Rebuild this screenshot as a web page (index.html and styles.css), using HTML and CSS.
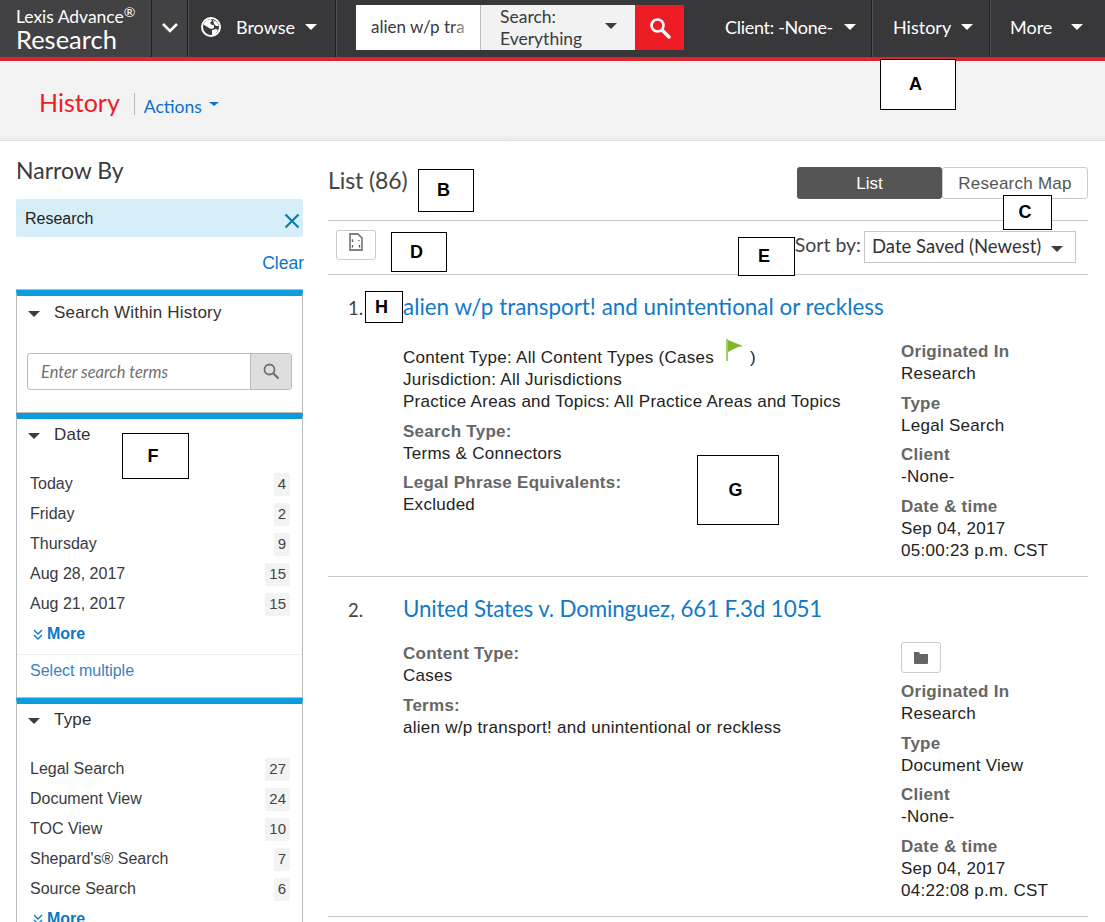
FILE: index.html
```html
<!DOCTYPE html>
<html lang="en">
<head>
<meta charset="utf-8">
<title>History</title>
<link rel="stylesheet" href="styles.css">
</head>
<body>
<header class="topbar">
  <div class="cell brand">
    <div class="brand-top">Lexis Advance<sup>®</sup></div>
    <div class="brand-main">Research</div>
  </div>
  <div class="cell chev">
    <svg width="18" height="11" viewBox="0 0 18 11"><path d="M2 2l7 7 7-7" fill="none" stroke="#fff" stroke-width="2.6"/></svg>
  </div>
  <div class="cell browse">
    <svg class="globe" width="20" height="20" viewBox="0 0 20 20"><circle cx="10" cy="10" r="9" fill="#38383b" stroke="#fff" stroke-width="2"/><path d="M3 6l3-3 4-1 1 2-2 2 2 2 2 0 0 3-3 1-2-1-3-2-2-1zM12 3l4 2 2 4-3 0-2-2zM11 13l4-1 2 1-3 5-3 1z" fill="#fff"/></svg>
    <span>Browse</span><i class="caret white browse-caret"></i>
  </div>
  <div class="searchgroup">
    <div class="query">alien w/p tra</div>
    <div class="scope"><span>Search: Everything</span><i class="caret dark"></i></div>
    <div class="go">
      <svg width="22" height="22" viewBox="0 0 22 22"><circle cx="8.5" cy="8.5" r="6" fill="none" stroke="#fff" stroke-width="2.6"/><path d="M13 13l7 7" stroke="#fff" stroke-width="3.4" stroke-linecap="round"/></svg>
    </div>
  </div>
  <div class="cell client"><span>Client: -None-</span><i class="caret white"></i></div>
  <div class="cell hist"><span>History</span><i class="caret white"></i></div>
  <div class="cell more"><span>More</span><i class="caret white"></i></div>
</header>

<div class="subbar">
  <h1>History</h1>
  <div class="actions"><span>Actions</span><i class="caret blue"></i></div>
</div>

<div class="page">
  <aside class="side">
    <h2>Narrow By</h2>
    <div class="pill"><span>Research</span>
      <svg width="16" height="16" viewBox="0 0 16 16"><path d="M1.5 1.5l13 13M14.5 1.5l-13 13" stroke="#0f7ca8" stroke-width="2.2"/></svg>
    </div>
    <a class="clear">Clear</a>

    <section class="facet within">
      <div class="facet-head"><i class="caret dark"></i><span>Search Within History</span></div>
      <div class="within-box">
        <div class="within-input">Enter search terms</div>
        <div class="within-btn"><svg width="17" height="17" viewBox="0 0 17 17"><circle cx="6.5" cy="6.5" r="5" fill="none" stroke="#6f6f6f" stroke-width="1.8"/><path d="M10.5 10.5l5 5" stroke="#6f6f6f" stroke-width="2.2"/></svg></div>
      </div>
    </section>

    <section class="facet date">
      <div class="facet-head"><i class="caret dark"></i><span>Date</span></div>
      <ul class="rows">
        <li><span>Today</span><b>4</b></li>
        <li><span>Friday</span><b>2</b></li>
        <li><span>Thursday</span><b>9</b></li>
        <li><span>Aug 28, 2017</span><b>15</b></li>
        <li><span>Aug 21, 2017</span><b>15</b></li>
      </ul>
      <a class="morelink"><svg width="10" height="11" viewBox="0 0 10 11"><path d="M1 1l4 4 4-4M1 6l4 4 4-4" fill="none" stroke="#0b77c5" stroke-width="1.3"/></svg>More</a>
      <div class="multi">Select multiple</div>
    </section>

    <section class="facet type">
      <div class="facet-head"><i class="caret dark"></i><span>Type</span></div>
      <ul class="rows">
        <li><span>Legal Search</span><b>27</b></li>
        <li><span>Document View</span><b>24</b></li>
        <li><span>TOC View</span><b>10</b></li>
        <li><span>Shepard's® Search</span><b>7</b></li>
        <li><span>Source Search</span><b>6</b></li>
      </ul>
      <a class="morelink"><svg width="10" height="11" viewBox="0 0 10 11"><path d="M1 1l4 4 4-4M1 6l4 4 4-4" fill="none" stroke="#0b77c5" stroke-width="1.3"/></svg>More</a>
    </section>
  </aside>

  <main class="main">
    <div class="listhead">
      <div class="count">List (86)</div>
      <div class="toggle"><div class="tog on">List</div><div class="tog off">Research Map</div></div>
    </div>
    <div class="tools">
      <div class="iconbtn"><svg width="14" height="18" viewBox="0 0 14 18"><path d="M1 1h8l4 4v12H1z" fill="#fff" stroke="#85807c" stroke-width="1.8"/><path d="M4 7H3.500v2M10 8V7M4 14H3.500v-2M10 14h.5v-2" fill="none" stroke="#666" stroke-width="1.4"/></svg></div>
      <div class="sort"><span class="sort-label">Sort by:</span>
        <div class="sort-select"><span>Date Saved (Newest)</span><i class="caret dark"></i></div>
      </div>
    </div>

    <article class="result first">
      <div class="num">1.</div>
      <div class="body">
        <a class="title">alien w/p transport! and unintentional or reckless</a>
        <div class="para">
          <div>Content Type: All Content Types (Cases <svg class="flag" width="20" height="22" viewBox="0 0 20 22"><path d="M1 0h2v22H1z" fill="#a5cf6c"/><path d="M3 1l15 6-5 1-10 5z" fill="#7fb82e"/></svg> )</div>
          <div>Jurisdiction: All Jurisdictions</div>
          <div>Practice Areas and Topics: All Practice Areas and Topics</div>
        </div>
        <div class="para"><strong>Search Type:</strong><div>Terms &amp; Connectors</div></div>
        <div class="para"><strong>Legal Phrase Equivalents:</strong><div>Excluded</div></div>
      </div>
      <div class="meta">
        <div class="para"><strong>Originated In</strong><div>Research</div></div>
        <div class="para tight"><strong>Type</strong><div>Legal Search</div></div>
        <div class="para"><strong>Client</strong><div>-None-</div></div>
        <div class="para"><strong>Date &amp; time</strong><div>Sep 04, 2017</div><div>05:00:23 p.m. CST</div></div>
      </div>
    </article>

    <article class="result second">
      <div class="num">2.</div>
      <div class="body">
        <a class="title">United States v. Dominguez, 661 F.3d 1051</a>
        <div class="para"><strong>Content Type:</strong><div>Cases</div></div>
        <div class="para"><strong>Terms:</strong><div>alien w/p transport! and unintentional or reckless</div></div>
      </div>
      <div class="meta">
        <div class="folder"><svg width="16" height="13" viewBox="0 0 16 13"><path d="M1 1h5l1 2h8v9a1 1 0 0 1-1 1H2a1 1 0 0 1-1-1z" fill="#666"/></svg></div>
        <div class="para"><strong>Originated In</strong><div>Research</div></div>
        <div class="para tight"><strong>Type</strong><div>Document View</div></div>
        <div class="para"><strong>Client</strong><div>-None-</div></div>
        <div class="para"><strong>Date &amp; time</strong><div>Sep 04, 2017</div><div>04:22:08 p.m. CST</div></div>
      </div>
    </article>
  </main>
</div>

<div class="tag tag-a">A</div>
<div class="tag tag-b">B</div>
<div class="tag tag-c">C</div>
<div class="tag tag-d">D</div>
<div class="tag tag-e">E</div>
<div class="tag tag-f">F</div>
<div class="tag tag-g">G</div>
<div class="tag tag-h">H</div>
</body>
</html>
```

FILE: styles.css
```css
* { box-sizing: border-box; }
html, body { margin: 0; padding: 0; height: 100%; overflow: hidden; background: #fff; }
body { position: relative; font-family: "Liberation Sans", Arial, sans-serif; font-size: 16px; color: #333; }
ul { list-style: none; margin: 0; padding: 0; }
h1, h2 { margin: 0; font-weight: 400; font-family: Lato, sans-serif; }

.caret { display: inline-block; width: 0; height: 0; border-left: 6px solid transparent; border-right: 6px solid transparent; border-top: 6px solid #fff; flex: none; }
.caret.dark { border-top-color: #3d3d40; }
.caret.blue { border-left-width: 5px; border-right-width: 5px; border-top: 4px solid #0b6fd0; }

.topbar { display: flex; height: 61px; background: #38383b; border-bottom: 4px solid #dd2532; font-family: Lato, sans-serif; color: #fff; font-size: 18px; }
.cell { display: flex; align-items: center; height: 57px; padding-bottom: 3px; border-right: 1px solid #1f1f21; box-shadow: 1px 0 0 #505053; }
.brand { width: 152px; flex-direction: column; align-items: flex-start; padding: 8px 0 0 16px; background: #424245; }
.brand-top { font-size: 17.500px; line-height: 18px; letter-spacing: -.03px; white-space: nowrap; }
.brand-top sup { font-size: 14px; line-height: 0; vertical-align: 6px; letter-spacing: 0; }
.brand-main { font-size: 25.500px; line-height: 27px; }
.chev { width: 36px; justify-content: center; background: #424245; }
.browse { width: 148px; padding-left: 13px; }
.globe { margin-right: 15px; }
.browse-caret { margin-left: 10px; margin-bottom: 0; }
.searchgroup { display: flex; height: 45px; margin: 5px 20px 0 20px; width: 328px; color: #3a3a3d; }
.query { position: relative; width: 125px; background: #fff; padding: 11px 0 0 15px; font-size: 17px; border-right: 1px solid #bbb; white-space: nowrap; overflow: hidden; }
.query::after { content: ""; position: absolute; top: 0; right: 0; bottom: 0; width: 28px; background: linear-gradient(to right, rgba(255,255,255,0), #fff 85%); }
.scope { width: 154px; background: #f2f2f2; display: flex; align-items: center; justify-content: space-between; padding: 1px 18px 0 19px; font-size: 17.500px; line-height: 22px; }
.scope span { width: 90px; }
.scope .caret { margin-bottom: 5px; }
.go { width: 49px; background: #ee1c25; display: flex; align-items: center; justify-content: center; }
.client { width: 168px; padding-left: 21px; justify-content: space-between; padding-right: 15px; }
.client span { letter-spacing: -.3px; }
.hist { width: 118px; padding-left: 21px; justify-content: space-between; padding-right: 16px; }
.more { width: 115px; padding-left: 20px; justify-content: space-between; padding-right: 22px; border-right: 0; box-shadow: none; }

.subbar { height: 80px; background: linear-gradient(#f3f3f3 92%, #ebebeb); border-bottom: 1px solid #e0e0e0; display: flex; align-items: center; padding: 0 0 2px 39px; }
.subbar h1 { color: #ee1c25; font-size: 25px; padding-right: 14px; margin-top: 4px; }
.actions { border-left: 1px solid #bbb; padding-left: 9px; font-family: Lato, sans-serif; color: #0b6fd0; font-size: 17.500px; height: 22px; line-height: 24px; margin-top: 8px; display: flex; align-items: center; }
.actions span { position: relative; top: 3px; }
.actions .caret { margin-left: 7px; }

.page { display: flex; padding-left: 16px; }
.side { width: 287px; flex: none; padding-top: 15px; }
.side h2 { font-size: 23px; line-height: 28px; color: #3a3a3d; margin-bottom: 15px; }
.pill { height: 38px; background: #d5eef8; border-radius: 2px; display: flex; align-items: center; justify-content: space-between; padding: 2px 3px 0 9px; color: #222; }
.pill svg { margin-top: 3px; }
.clear { display: block; text-align: right; color: #0b77c5; margin-top: 17px; height: 35px; line-height: 18px; font-size: 17.500px; margin-right: -1px; }

.facet { border: 1px solid #bbb; border-bottom: 0; border-top: 6px solid #0b9ddb; box-shadow: 0 -1px 0 #bbb; }
.facet-head { display: flex; align-items: center; height: 31px; padding-left: 11px; color: #333; font-size: 17px; letter-spacing: .2px; }
.facet-head .caret { margin-right: 14px; margin-top: 2px; }
.within { height: 123px; margin-top: 1px; }
.within .facet-head { height: 33px; }
.within-box { display: flex; margin: 24px 10px 0; height: 37px; border: 1px solid #bbb; border-radius: 3px; overflow: hidden; }
.within-input { flex: 1; padding: 1px 0 0 13px; line-height: 35px; font-family: Lato, sans-serif; font-style: italic; color: #707070; font-size: 16.500px; }
.within-btn { width: 41px; background: #dedede; border-left: 1px solid #bbb; display: flex; align-items: center; justify-content: center; }
.date { height: 285px; }
.rows { margin-top: 19px; padding: 0 12px 0 13px; }
.rows li { display: flex; align-items: center; justify-content: space-between; height: 30px; color: #3a3a3d; font-size: 16px; }
.rows b { font-weight: 400; background: #f3f3f3; border-radius: 2px; height: 23px; line-height: 22px; padding: 0 4px; font-size: 15px; min-width: 16px; text-align: right; color: #444; }
.morelink { display: flex; align-items: center; gap: 4px; padding-left: 16px; height: 30px; color: #0b77c5; font-weight: 700; font-size: 16px; }
.multi { margin-top: 5px; border-top: 1px solid #f0f0f0; padding: 7px 0 0 13px; color: #3a7fc4; font-size: 16px; }

.main { width: 760px; margin-left: 25px; }
.listhead { display: flex; justify-content: space-between; height: 80px; border-bottom: 1px solid #c6c6c6; padding-top: 25px; }
.count { font-family: Lato, sans-serif; font-size: 23px; color: #444; line-height: 28px; letter-spacing: -.1px; }
.toggle { display: flex; height: 32px; margin-top: 1px; }
.tog { width: 146px; text-align: center; font-size: 17px; line-height: 33px; border-radius: 3px; }
.tog.on { background: #555; color: #fff; width: 145px; }
.tog.off { border: 1px solid #ccc; color: #555; background: #fff; letter-spacing: .25px; line-height: 31px; }
.tools { display: flex; justify-content: space-between; height: 54px; border-bottom: 1px solid #c6c6c6; padding: 9px 12px 0 8px; }
.iconbtn { width: 40px; height: 30px; border: 1px solid #ccc; border-radius: 3px; display: flex; justify-content: center; padding-top: 2px; }
.sort { display: flex; align-items: flex-start; }
.sort-label { font-family: Lato, sans-serif; font-size: 19.500px; line-height: 24px; color: #444; margin: 3px 3px 0 0; }
.sort-select { width: 212px; height: 32px; margin-top: 1px; border: 1px solid #c6c6c6; display: flex; align-items: center; justify-content: space-between; padding: 0 12px 2px 7px; font-family: Lato, sans-serif; font-size: 18.500px; color: #333; }
.sort-select .caret { margin-top: 6px; }

.result { display: grid; grid-template-columns: 75px 498px 1fr; border-bottom: 1px solid #c6c6c6; }
.first { height: 302px; }
.second { height: 340px; }
.num { padding: 21px 0 0 20px; font-family: Lato, sans-serif; font-size: 18.500px; line-height: 24px; color: #444; }
.title { display: block; color: #1279c9; font-family: Lato, sans-serif; font-size: 22.400px; line-height: 30px; white-space: nowrap; }
.body { padding-top: 17px; }
.para { color: #222; font-size: 17px; letter-spacing: .27px; line-height: 22px; margin-bottom: 8px; }
.para strong { color: #666; display: block; }
.para.tight { margin-bottom: 7px; }
.first .title { margin-bottom: 25px; }
.second .title { margin-bottom: 19px; letter-spacing: -.16px; }
.first .body .para:nth-child(3) { margin-bottom: 7px; }
.flag { vertical-align: 2px; margin: -8px 0 0 6px; }
.first .meta { padding-top: 66px; }
.second .meta { padding-top: 65px; }
.folder { width: 40px; height: 31px; border: 1px solid #ccc; border-radius: 3px; display: flex; align-items: center; justify-content: center; margin-bottom: 8px; }

.tag { position: absolute; background: #fff; border: 1px solid #000; color: #000; font-weight: 700; font-size: 18px; display: flex; align-items: center; justify-content: center; padding-right: 5px; }
.tag-a { left: 880px; top: 59px; width: 76px; height: 51px; }
.tag-b { left: 418px; top: 169px; width: 56px; height: 43px; }
.tag-c { left: 1003px; top: 195px; width: 49px; height: 35px; }
.tag-d { left: 391px; top: 232px; width: 56px; height: 40px; }
.tag-e { left: 738px; top: 237px; width: 57px; height: 39px; }
.tag-f { left: 122px; top: 433px; width: 67px; height: 46px; }
.tag-g { left: 697px; top: 455px; width: 82px; height: 70px; }
.tag-h { left: 365px; top: 291px; width: 38px; height: 32px; }
```
